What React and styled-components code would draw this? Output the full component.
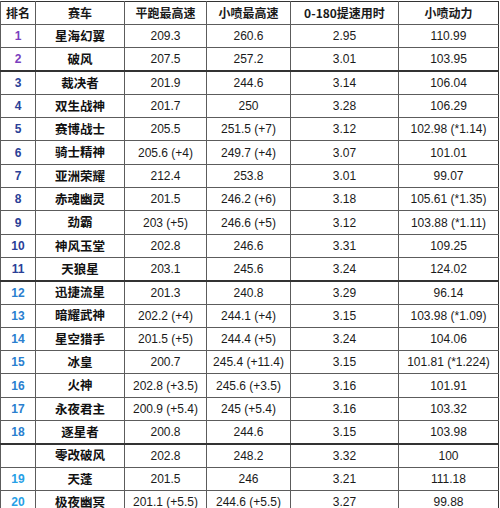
import styled, { createGlobalStyle } from "styled-components";

const GlobalStyle = createGlobalStyle`
    body {
        margin: 0;
        background: #fff;
        font-family: "Liberation Sans", Arial, "Noto Sans CJK SC", sans-serif;
    }
`

const Page = styled.div`
    padding-top: 1px;
`

const Table = styled.table`
    width: 499px;
    border-collapse: collapse;
    table-layout: fixed;
    border: 1px solid #333;
    color: #1a1a1a;
    font-size: 12px;
`

const Row = styled.tr`
    height: ${p => p.$h || 23.3}px;
    border-bottom: ${p => p.$thick ? "2px solid #333" : "1px solid #5c5c5c"};
`

const Th = styled.th`
    border-left: 1px solid #5c5c5c;
    font-family: "Noto Sans CJK SC", sans-serif;
    font-weight: 700;
    font-size: 12px;
    padding: 0;
    text-align: center;
    vertical-align: middle;
    line-height: 1;
`

const Cell = styled.td`
    border-left: 1px solid #5c5c5c;
    padding: 0;
    text-align: center;
    vertical-align: middle;
    line-height: 1;
`

const RankCell = styled(Cell)`
    color: ${p => p.$color};
    font-weight: 700;
`

const NameCell = styled(Cell)`
    font-family: "Noto Sans CJK SC", sans-serif;
    font-weight: 700;
    font-size: 12.5px;
    color: #111;
`

const colors = {
    purple: "#7b3fbe",
    navy: "#2a3f97",
    blue: "#2a7fcf",
    sky: "#27a0e6",
}

const rows = [
    ["1", "星海幻翼", "209.3", "260.6", "2.95", "110.99", "purple"],
    ["2", "破风", "207.5", "257.2", "3.01", "103.95", "purple", true],
    ["3", "裁决者", "201.9", "244.6", "3.14", "106.04", "navy"],
    ["4", "双生战神", "201.7", "250", "3.28", "106.29", "navy"],
    ["5", "赛博战士", "205.5", "251.5 (+7)", "3.12", "102.98 (*1.14)", "navy"],
    ["6", "骑士精神", "205.6 (+4)", "249.7 (+4)", "3.07", "101.01", "navy"],
    ["7", "亚洲荣耀", "212.4", "253.8", "3.01", "99.07", "navy"],
    ["8", "赤魂幽灵", "201.5", "246.2 (+6)", "3.18", "105.61 (*1.35)", "navy"],
    ["9", "劲霸", "203 (+5)", "246.6 (+5)", "3.12", "103.88 (*1.11)", "navy"],
    ["10", "神风玉堂", "202.8", "246.6", "3.31", "109.25", "navy"],
    ["11", "天狼星", "203.1", "245.6", "3.24", "124.02", "navy", true],
    ["12", "迅捷流星", "201.3", "240.8", "3.29", "96.14", "blue"],
    ["13", "暗耀武神", "202.2 (+4)", "244.1 (+4)", "3.15", "103.98 (*1.09)", "blue"],
    ["14", "星空猎手", "201.5 (+5)", "244.4 (+5)", "3.24", "104.06", "blue"],
    ["15", "冰皇", "200.7", "245.4 (+11.4)", "3.15", "101.81 (*1.224)", "blue"],
    ["16", "火神", "202.8 (+3.5)", "245.6 (+3.5)", "3.16", "101.91", "blue"],
    ["17", "永夜君主", "200.9 (+5.4)", "245 (+5.4)", "3.16", "103.32", "blue"],
    ["18", "逐星者", "200.8", "244.6", "3.15", "103.98", "blue", true],
    ["", "零改破风", "202.8", "248.2", "3.32", "100", "sky"],
    ["19", "天蓬", "201.5", "246", "3.21", "111.18", "sky"],
    ["20", "极夜幽冥", "201.1 (+5.5)", "244.6 (+5.5)", "3.27", "99.88", "sky"],
]

const widths = [35, 89, 82, 84, 108, 100]
const heads = ["排名", "赛车", "平跑最高速", "小喷最高速", "0-180提速用时", "小喷动力"]

const App = () => {
    return (
        <>
            <GlobalStyle />
            <Page>
                <Table>
                    <colgroup>
                        {widths.map((w, i) => <col key={i} style={{ width: w }} />)}
                    </colgroup>
                    <thead>
                        <Row $h={23}>
                            {heads.map(h => <Th key={h}>{h}</Th>)}
                        </Row>
                    </thead>
                    <tbody>
                        {rows.map((r, i) => (
                            <Row key={i} $thick={r[7]}>
                                <RankCell $color={colors[r[6]]}>{r[0]}</RankCell>
                                <NameCell>{r[1]}</NameCell>
                                <Cell>{r[2]}</Cell>
                                <Cell>{r[3]}</Cell>
                                <Cell>{r[4]}</Cell>
                                <Cell>{r[5]}</Cell>
                            </Row>
                        ))}
                    </tbody>
                </Table>
            </Page>
        </>
    )
}

export default App
